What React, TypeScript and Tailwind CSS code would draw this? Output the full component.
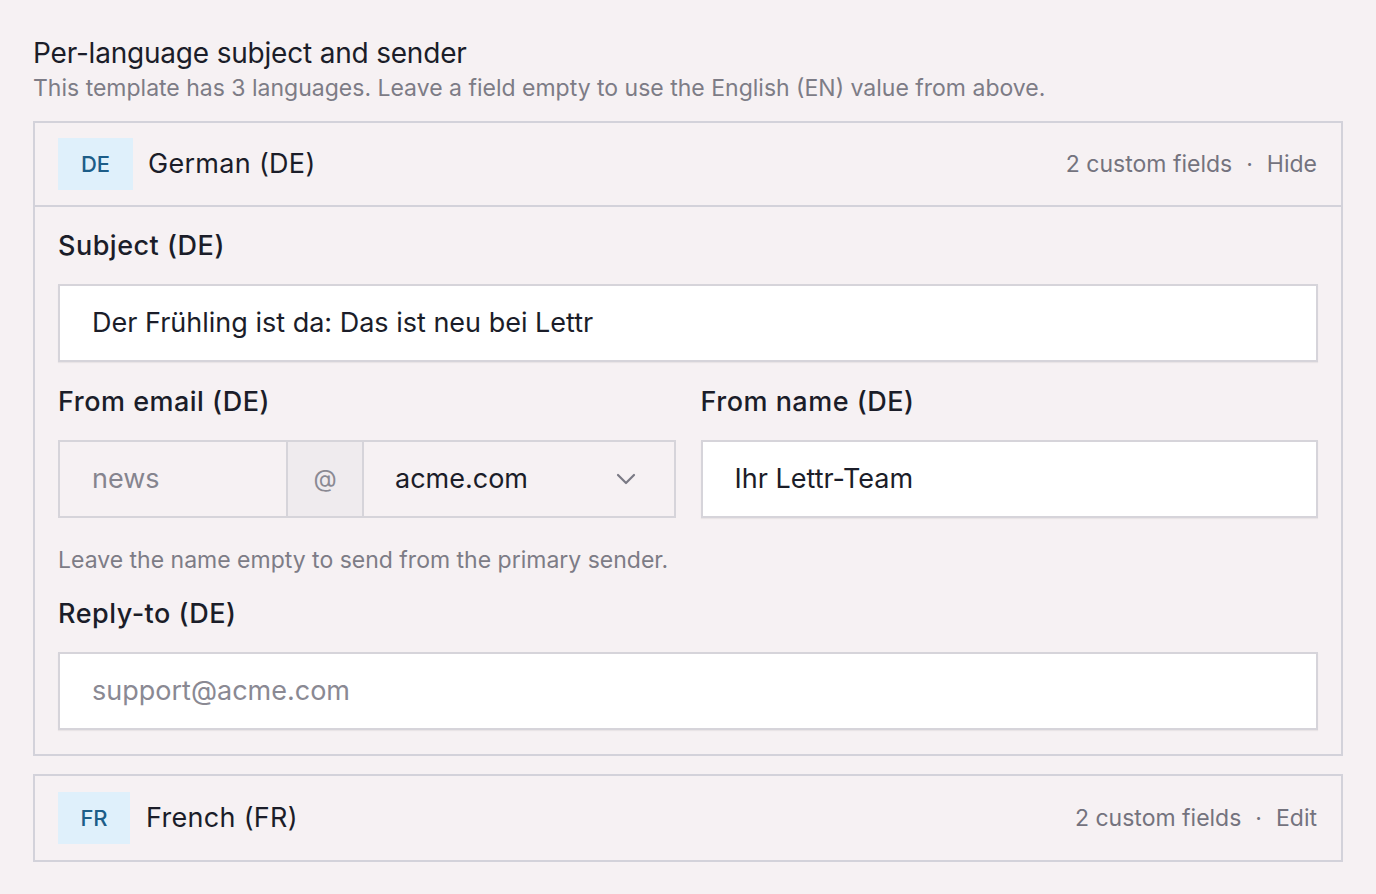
import React from "react";

function Badge({ code, w }: { code: string; w: string }) {
  return (
    <div
      className={`flex h-[52px] ${w} items-center justify-center bg-[#dff0fb] text-[22px] font-medium text-[#1c5d88]`}
    >
      {code}
    </div>
  );
}

function Header({
  code,
  name,
  action,
  bordered,
  badgeW,
  gap,
}: {
  code: string;
  name: string;
  action: string;
  bordered?: boolean;
  badgeW: string;
  gap: string;
}) {
  return (
    <div
      className={`flex h-[84px] items-center justify-between pl-[23px] pr-[24px] ${
        bordered ? "border-b-2 border-[#d3d2da]" : ""
      }`}
    >
      <div className={`flex items-center ${gap}`}>
        <Badge code={code} w={badgeW} />
        <span className="text-[27px] tracking-[0.3px] text-[#1b1d29]">{name}</span>
      </div>
      <div className="flex items-center text-[23px] text-[#74737e]">
        <span>2 custom fields</span>
        <span className="mx-[14px]">·</span>
        <span>{action}</span>
      </div>
    </div>
  );
}

function Label({ children }: { children: React.ReactNode }) {
  return (
    <div className="text-[27px] leading-[34px] font-medium tracking-[0.5px] text-[#1b1d29]">
      {children}
    </div>
  );
}

const inputCls =
  "flex h-[78px] items-center border-2 border-[#d6d4da] bg-white px-[32px] text-[27px] shadow-[0_1px_1px_rgba(0,0,0,0.05)]";

export default function App() {
  return (
    <div
      className="min-h-[894px] w-full bg-[#f6f1f3] px-[33px] pt-[36px]"
      style={{ fontFamily: "Inter, 'Noto Sans', sans-serif" }}
    >
      <div className="text-[28px] leading-[34px] tracking-[-0.2px] text-[#1b1d29]">
        Per-language subject and sender
      </div>
      <div className="mt-[3px] text-[23px] leading-[30px] text-[#7d7c86]">
        This template has 3 languages. Leave a field empty to use the English (EN) value from above.
      </div>

      <div className="mt-[18px] border-2 border-[#d3d2da]">
        <Header
          code="DE"
          name="German (DE)"
          action="Hide"
          bordered
          badgeW="w-[75px]"
          gap="gap-[15px]"
        />
        <div className="px-[23px] pt-[22px] pb-[24px]">
          <Label>Subject (DE)</Label>
          <div className={`mt-[21px] ${inputCls} text-[#1b1d29]`}>
            Der Frühling ist da: Das ist neu bei Lettr
          </div>

          <div className="mt-[23px] grid grid-cols-2 gap-[25px]">
            <div>
              <Label>From email (DE)</Label>
              <div className="mt-[21px] flex h-[78px] border-2 border-[#d6d4da] text-[27px]">
                <div className="flex w-[228px] items-center border-r-2 border-[#d6d4da] px-[32px] text-[#85848e]">
                  news
                </div>
                <div className="flex w-[76px] items-center justify-center border-r-2 border-[#d6d4da] bg-[#efebee] text-[24px] text-[#8a8993]">
                  @
                </div>
                <div className="flex flex-1 items-center justify-between pl-[31px] pr-[38px] text-[#1b1d29]">
                  <span>acme.com</span>
                  <svg width="20" height="12" viewBox="0 0 20 12" fill="none">
                    <path
                      d="M2 2l8 8 8-8"
                      stroke="#7a7984"
                      strokeWidth="2.2"
                      strokeLinecap="round"
                      strokeLinejoin="round"
                    />
                  </svg>
                </div>
              </div>
            </div>
            <div>
              <Label>From name (DE)</Label>
              <div className={`mt-[21px] ${inputCls} text-[#1b1d29]`}>
                Ihr Lettr-Team
              </div>
            </div>
          </div>

          <div className="mt-[27px] text-[23px] leading-[30px] text-[#7d7c86]">
            Leave the name empty to send from the primary sender.
          </div>

          <div className="mt-[22px]">
            <Label>Reply-to (DE)</Label>
          </div>
          <div className={`mt-[21px] ${inputCls} text-[#8a8993]`}>
            support@acme.com
          </div>
        </div>
      </div>

      <div className="mt-[18px] border-2 border-[#d3d2da]">
        <Header
          code="FR"
          name="French (FR)"
          action="Edit"
          badgeW="w-[72px]"
          gap="gap-[16px]"
        />
      </div>
    </div>
  );
}
